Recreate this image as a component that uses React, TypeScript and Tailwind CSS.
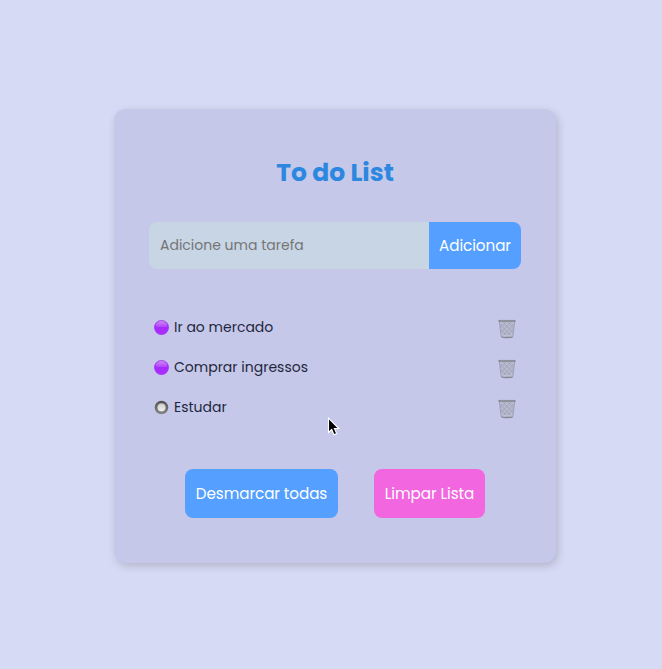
import { useState } from "react";

type Task = { id: number; name: string; done: boolean };

const initialTasks: Task[] = [
  { id: 1, name: "Ir ao mercado", done: true },
  { id: 2, name: "Comprar ingressos", done: true },
  { id: 3, name: "Estudar", done: false },
];

function PurpleDot() {
  return (
    <svg width="15" height="15" viewBox="0 0 15 15" className="block">
      <defs>
        <linearGradient id="dot-body" x1="0" y1="0" x2="0" y2="1">
          <stop offset="0" stopColor="#ab48e8" />
          <stop offset=".5" stopColor="#a62afc" />
          <stop offset="1" stopColor="#ac32ff" />
        </linearGradient>
        <linearGradient id="dot-shine" x1="0" y1="0" x2="0" y2="1">
          <stop offset="0" stopColor="#cc84f2" />
          <stop offset="1" stopColor="#b045fc" />
        </linearGradient>
      </defs>
      <circle cx="7.5" cy="7.5" r="7.4" fill="url(#dot-body)" />
      <path d="M1.600 6.300C2 3.300 4.300 1.100 7.500 1.100s5.500 2.200 5.900 5.200c-1.500.6-3.700.8-5.900.8s-4.400-.2-5.900-.8Z" fill="url(#dot-shine)" />
    </svg>
  );
}

function RadioDot() {
  return (
    <svg width="15" height="15" viewBox="0 0 15 15" className="block">
      <defs>
        <linearGradient id="radio-ring" x1="0" y1="0" x2="0" y2="1">
          <stop offset="0" stopColor="#4e4e4e" />
          <stop offset="1" stopColor="#868686" />
        </linearGradient>
        <linearGradient id="radio-core" x1="0" y1="0" x2="0" y2="1">
          <stop offset="0" stopColor="#cfcfcf" />
          <stop offset="1" stopColor="#f0f0f0" />
        </linearGradient>
      </defs>
      <circle cx="7.5" cy="7.5" r="6.8" fill="url(#radio-ring)" />
      <circle cx="7.5" cy="7.5" r="4.5" fill="#999" />
      <circle cx="7.5" cy="7.5" r="3.8" fill="url(#radio-core)" />
    </svg>
  );
}

function Basket() {
  return (
    <svg width="18" height="20" viewBox="0 0 18 20" className="block">
      <path d="M1.3 2.5 3.2 17.5c.2 1.500 11.400 1.500 11.600 0L16.700 2.500Z" fill="#b6bad0" />
      <g stroke="#999eb0" strokeWidth=".6" fill="none">
        <path d="m2 5 11.500 12.500M5 3l10 10.500M10 3l6 6M2.700 10l7 8M16 5 4.500 17.500M13 3 3 13.500M8 3 2 9M15.300 10l-7 8" />
      </g>
      <path d="M1.300 2.500 3.200 17.500M16.700 2.500l-1.900 15" stroke="#9499a8" strokeWidth=".8" />
      <path d="M3.100 17.200c2 .9 9.800.9 11.800 0l-.3 1.200c-1.600 1.100-9.600 1.100-11.200 0Z" fill="#838891" />
      <path d="M4.500 16.700h9" stroke="#c6cad2" strokeWidth=".8" />
      <rect x=".3" y="1" width="17.400" height="1.800" rx=".8" fill="#7d8189" />
      <path d="M1.500 1.300h15" stroke="#a5a9b1" strokeWidth=".6" />
    </svg>
  );
}

export default function App() {
  const [tasks, setTasks] = useState(initialTasks);
  const toggle = (id: number) =>
    setTasks(tasks.map((t) => (t.id === id ? { ...t, done: !t.done } : t)));

  return (
    <main className="relative h-screen min-h-[669px] bg-[#d6daf4] pt-[109px] pl-[114px] font-[Poppins,Inter,sans-serif]">
      <section className="flex h-[454px] w-[442px] flex-col rounded-[12px] bg-[#c5c8e9] px-[35px] pt-[44px] shadow-[2px_3px_8px_rgba(0,0,0,0.17)]">
        <h1 className="h-[40px] text-center text-[25px] leading-[39px] font-bold whitespace-nowrap text-[#2b87e0]">
          To do List
        </h1>
        <form className="mt-[29px] flex h-[47px]" onSubmit={(e) => e.preventDefault()}>
          <input
            placeholder="Adicione uma tarefa"
            className="w-[280px] rounded-l-[8px] bg-[#c7d5e5] px-[11px] text-[14px] text-[#1d2639] outline-none placeholder:text-[#757575]"
          />
          <button className="w-[92px] rounded-r-[8px] bg-[#549fff] pt-[2px] text-[15.2px] tracking-[-0.08px] whitespace-nowrap text-white">
            Adicionar
          </button>
        </form>
        <ul className="mt-[38px]">
          {tasks.map((t) => (
            <li key={t.id} className="flex h-[40px] items-center px-[5px]">
              <button onClick={() => toggle(t.id)}>{t.done ? <PurpleDot /> : <RadioDot />}</button>
              <span className="ml-[5px] flex-1 text-[14px] leading-5 text-[#1f2740]">{t.name}</span>
              <button className="mt-[3px]" onClick={() => setTasks(tasks.filter((x) => x.id !== t.id))}>
                <Basket />
              </button>
            </li>
          ))}
        </ul>
        <div className="mt-[42px] flex h-[49px] justify-center gap-[36px] text-[15.2px] tracking-[-0.08px] text-white">
          <button
            className="w-[153px] rounded-[8px] bg-[#549fff] pt-[2px] whitespace-nowrap"
            onClick={() => setTasks(tasks.map((t) => ({ ...t, done: false })))}
          >
            Desmarcar todas
          </button>
          <button className="w-[111px] rounded-[8px] bg-[#f267df] pt-[2px] whitespace-nowrap" onClick={() => setTasks([])}>
            Limpar Lista
          </button>
        </div>
      </section>
      <svg className="pointer-events-none absolute top-[416px] left-[326px]" width="15" height="21" viewBox="0 0 15 21">
        <path d="M2.500 2v14.500l3.200-3 2.300 5.300 2.700-1.200-2.300-5.100h4.300Z" fill="#000" stroke="#fff" strokeWidth="1.100" />
      </svg>
    </main>
  );
}
